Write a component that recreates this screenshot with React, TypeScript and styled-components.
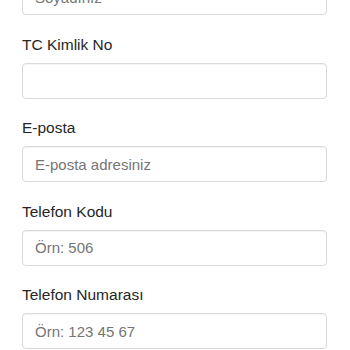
import styled, { createGlobalStyle } from "styled-components";

const GlobalStyle = createGlobalStyle`
  html, body {
    margin: 0;
    padding: 0;
    background: #fff;
  }
  body {
    font-family: "Liberation Sans", Arial, sans-serif;
    overflow: hidden;
  }
  * {
    box-sizing: border-box;
  }
`;

const Form = styled.form`
  width: 305px;
  margin: -49px 0 0 22px;
`;

const Group = styled.div`
  margin-bottom: 19.5px;
`;

const Label = styled.label`
  display: block;
  font-size: 15.5px;
  font-weight: 400;
  line-height: 20px;
  color: #262626;
  margin-bottom: 8px;
`;

const Input = styled.input`
  display: block;
  width: 100%;
  height: 36px;
  padding: 0 12px;
  font-family: inherit;
  font-size: 15px;
  color: #333;
  background: #fff;
  border: 1px solid #dadada;
  border-radius: 4px;
  box-shadow: inset 0 1px 1px rgba(0, 0, 0, 0.05);
  outline: none;

  &::placeholder {
    color: #757575;
  }
`;

const fields = [
  { label: "Soyadınız", placeholder: "Soyadınız" },
  { label: "TC Kimlik No", placeholder: "" },
  { label: "E-posta", placeholder: "E-posta adresiniz" },
  { label: "Telefon Kodu", placeholder: "Örn: 506" },
  { label: "Telefon Numarası", placeholder: "Örn: 123 45 67" },
];

export default function App() {
  return (
    <>
      <GlobalStyle />
      <Form onSubmit={(e) => e.preventDefault()}>
        {fields.map((f) => (
          <Group key={f.label}>
            <Label>{f.label}</Label>
            <Input type="text" placeholder={f.placeholder} />
          </Group>
        ))}
      </Form>
    </>
  );
}
